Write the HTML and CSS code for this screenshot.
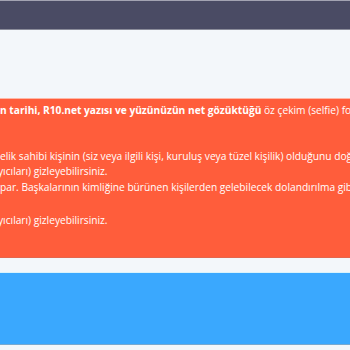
FILE: index.html
```html
<!DOCTYPE html>
<html lang="tr">

<head>
    <meta charset="UTF-8">
    <meta name="viewport" content="width=device-width, initial-scale=1.0">
    <title>Doğrulama</title>
    <link rel="stylesheet" href="styles.css">
</head>

<body>
    <div class="topbar"></div>
    <div class="page">
        <div class="alert">
            <p class="para gap-2"><b>n tarihi, R10.net yazısı ve yüzünüzün net gözüktüğü</b> öz çekim (selfie) fotoğrafı</p>
            <p class="para">elik sahibi kişinin (siz veya ilgili kişi, kuruluş veya tüzel kişilik) olduğunu doğrulamak</p>
            <p class="para clip">yıcıları) gizleyebilirsiniz.</p>
            <p class="para gap-1">par. Başkalarının kimliğine bürünen kişilerden gelebilecek dolandırılma gibi</p>
            <p class="para clip">yıcıları) gizleyebilirsiniz.</p>
        </div>
        <div class="info"></div>
    </div>
</body>

</html>
```

FILE: styles.css
```css
html, body {
    margin: 0;
    padding: 0;
}

body {
    font-family: 'Open Sans', sans-serif;
    background: #f3f7fa;
    overflow: hidden;
}

.topbar {
    height: 28px;
    background: #4a4b64;
    border-top: 1px solid #a3a3b2;
    border-bottom: 1px solid #8b8c9a;
}

.page {
    padding-top: 68px;
}

.alert {
    background: #ff5d3b;
    border-top: 1px solid #ffb8a6;
    border-bottom: 1px solid #e4664d;
    color: #fff;
    font-size: 10.2px;
    line-height: 15.5px;
    padding: 4px 0 29px;
    height: 125px;
    overflow: hidden;
}

.para {
    margin: 0;
    white-space: nowrap;
}

.para b {
    font-weight: 700;
}

.clip {
    margin-left: -2px;
}

.gap-1 {
    margin-bottom: 18px;
}

.gap-2 {
    margin-bottom: 30px;
}

.info {
    margin-top: 14px;
    height: 71px;
    background: #3aa8fe;
    border-top: 1px solid #d9f3fb;
    border-bottom: 1px solid #78a9cf;
}
```
